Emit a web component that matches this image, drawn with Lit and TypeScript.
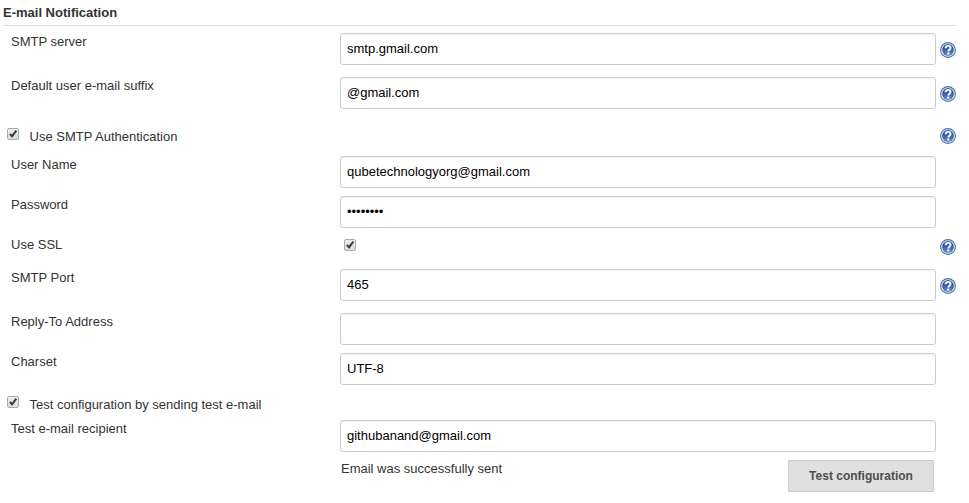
import { LitElement, html, css, nothing } from "lit";
import { customElement } from "lit/decorators.js";

@customElement("help-icon")
class HelpIcon extends LitElement {
  static styles = css`
    :host { display: block; width: 16px; height: 16px; }
    svg { display: block; }
  `;
  render() {
    return html`<svg width="16" height="16" viewBox="0 0 16 16">
      <defs><linearGradient id="g" x1="0" y1="0" x2="0" y2="1">
        <stop offset="0" stop-color="#2f5897"/><stop offset=".45" stop-color="#375f9d"/><stop offset="1" stop-color="#6592cb"/>
      </linearGradient></defs>
      <circle cx="8" cy="8" r="7.4" fill="#eef4fb" stroke="#4870ab" stroke-width="1.1"/>
      <circle cx="8" cy="8" r="5.9" fill="url(#g)"/>
      <path d="M5.7 6.3C5.7 4.7 6.6 3.9 8.1 3.9s2.4.8 2.4 2.1c0 1.7-2.2 1.8-2.2 3.6" fill="none" stroke="#fff" stroke-width="1.9"/>
      <rect x="7.2" y="10.5" width="2.1" height="2" fill="#fff"/>
    </svg>`;
  }
}

@customElement("check-box")
class CheckBox extends LitElement {
  static styles = css`
    :host { display: block; width: 12px; height: 12px; }
    svg { display: block; }
  `;
  render() {
    return html`<svg width="12" height="12" viewBox="0 0 12 12">
      <defs><linearGradient id="b" x1="0" y1="0" x2="0" y2="1">
        <stop offset="0" stop-color="#eee"/><stop offset="1" stop-color="#dcdcdc"/>
      </linearGradient></defs>
      <rect x=".5" y=".5" width="11" height="11" rx="1.5" fill="url(#b)" stroke="#aaa"/>
      <path d="M2.1 6.5 3.6 5.2 5 6.5 8.5 2.1 10.1 3.2 5.5 9.5H4.6Z" fill="#404040"/>
    </svg>`;
  }
}

interface Row {
  label: string;
  size: string;
  value?: string;
  help?: boolean;
  kind?: "check" | "toggle";
}

const ROWS: Row[] = [
  { label: "SMTP server", value: "smtp.gmail.com", help: true, size: "h44" },
  { label: "Default user e-mail suffix", value: "@gmail.com", help: true, size: "h51" },
  { label: "Use SMTP Authentication", kind: "toggle", help: true, size: "h28" },
  { label: "User Name", value: "qubetechnologyorg@gmail.com", size: "h40" },
  { label: "Password", value: "••••••••", size: "h40" },
  { label: "Use SSL", kind: "check", help: true, size: "h33" },
  { label: "SMTP Port", value: "465", help: true, size: "h44" },
  { label: "Reply-To Address", value: "", size: "h40" },
  { label: "Charset", value: "UTF-8", size: "h43" },
  { label: "Test configuration by sending test e-mail", kind: "toggle", size: "h24" },
  { label: "Test e-mail recipient", value: "githubanand@gmail.com", size: "h40" },
];

@customElement("app-root")
class AppRoot extends LitElement {
  static styles = css`
    :host {
      display: block; box-sizing: border-box; width: 969px; height: 503px;
      padding: 0 13px 0 3px; background: #fff; color: #333; overflow: hidden;
      font: 13px/18px "Liberation Sans", Arial, sans-serif;
    }
    .title {
      box-sizing: border-box; height: 26px; padding-top: 4px; margin-bottom: 7px;
      border-bottom: 1px solid #ddd; font-weight: 700;
    }
    .row { display: grid; grid-template-columns: 329px 596px 20px; padding-left: 8px; }
    .row help-icon { margin: 9px 0 0 4px; }
    .h24 { height: 24px; } .h28 { height: 28px; } .h33 { height: 33px; }
    .h40 { height: 40px; } .h43 { height: 43px; } .h44 { height: 44px; } .h51 { height: 51px; }
    .field {
      box-sizing: border-box; height: 32px; padding: 6px; border: 1px solid #ccc; border-radius: 3px;
      box-shadow: inset 0 1px 1px rgba(0, 0, 0, .05); color: #000;
    }
    .toggle { display: flex; padding-left: 4px; }
    .toggle help-icon { margin: 0 0 0 auto; }
    .toggle .label { margin-left: 10.5px; line-height: 17px; }
    .check help-icon { margin-top: 3px; }
    .check check-box { margin: 3px 0 0 4px; }
    .result { display: flex; justify-content: space-between; padding: 0 20px 0 338px; }
    .button {
      box-sizing: border-box; width: 146px; height: 32px; padding: 0; margin-right: 2px;
      border: 1px solid #ccc; border-radius: 1px; background: #e0e0e0; color: #4d4d4d;
      font: bold 12px/16px "Liberation Sans", Arial, sans-serif;
    }
  `;

  renderRow(r: Row) {
    const help = r.help ? html`<help-icon></help-icon>` : nothing;
    if (r.kind === "toggle") {
      return html`<div class="row toggle ${r.size}"><check-box></check-box><span class="label">${r.label}</span>${help}</div>`;
    }
    return html`<div class="row ${r.kind ?? ""} ${r.size}">
      <span>${r.label}</span>
      ${r.kind === "check" ? html`<div><check-box></check-box></div>` : html`<div class="field">${r.value}</div>`}
      ${help}
    </div>`;
  }

  render() {
    return html`
      <div class="title">E-mail Notification</div>
      ${ROWS.map((r) => this.renderRow(r))}
      <div class="result"><span>Email was successfully sent</span><button class="button">Test configuration</button></div>
    `;
  }
}
